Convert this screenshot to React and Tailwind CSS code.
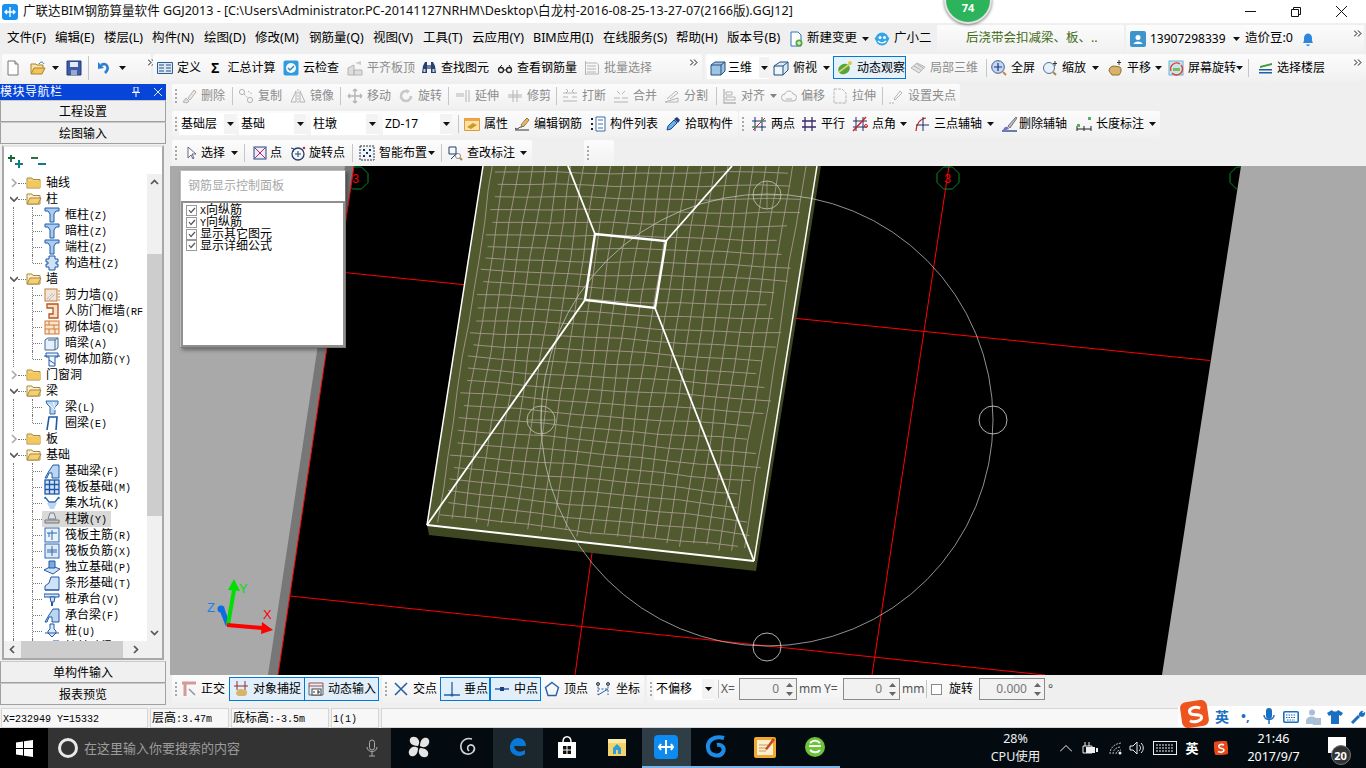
import React from "react";

const S = ({ children, w = 16, h = 16, vb = "0 0 16 16" }) => (
  <svg width={w} height={h} viewBox={vb} className="shrink-0" fill="none">{children}</svg>
);
const g = "#b4b4b4";
const I = {
  new: <><path d="M3 1h7l3 3v11H3z" fill="#fff" stroke="#777" /><path d="M10 1v3h3" fill="#ddd" stroke="#777" /></>,
  open: <><path d="M1 13V4h5l1 1h6v3" fill="#f8e2a6" stroke="#a8842c" /><path d="M1 14l3-6h11l-3 6z" fill="#f3c35a" stroke="#a8842c" /><path d="M9 4c2-3 4-2 5 0" stroke="#3a6ea8" /></>,
  save: <><path d="M1 1h14v14H1z" fill="#3c5ca8" stroke="#23397a" /><path d="M4 2h8v5H4z" fill="#e4ebf5" /><path d="M5 10h6v5H5z" fill="#9aa8c4" /></>,
  undo: <><path d="M5 5c6-3 9 3 4 8" stroke="#2a7fd0" strokeWidth="2.6" /><path d="M2 2v7l6-1z" fill="#2a7fd0" /></>,
  def: <><path d="M.5 2.5h15v11H.5z" fill="#dbe8f6" stroke="#2d5f96" /><path d="M2 5h5M2 8h5M2 11h5M9 5h5M9 8h5M9 11h5" stroke="#2d4f7a" /></>,
  cloud: <><rect x=".5" y=".5" width="15" height="15" rx="2" fill="#2f9be0" /><circle cx="8" cy="8" r="5" fill="#f4fbff" /><path d="M5 8l2 2 4-4" stroke="#2f80c0" strokeWidth="1.4" /></>,
  flat: <><path d="M1 15V8l6-3v10zM7 10h8v5H7z" fill="#ddd" stroke={g} /><path d="M8 3l6-2v4z" fill="#ccc" /></>,
  find: <><path d="M2 6l2-4h2v11H1zM14 6l-2-4h-2v11h5z" fill="#26406e" /><path d="M6 5h4v4H6z" fill="#6d7ea0" /><path d="M2.5 9h2v3h-2zM11.5 9h2v3h-2z" fill="#c6d4ea" /></>,
  glass: <><circle cx="4" cy="10" r="2.5" stroke="#222" strokeWidth="1.3" /><circle cx="12" cy="10" r="2.5" stroke="#222" strokeWidth="1.3" /><path d="M6.5 10h3M2 8l3-3M14 8l-2-3" stroke="#222" /></>,
  batch: <><path d="M1.5 1v14M1.5 3h11l2 2v9h-13" stroke={g} /><path d="M3 6h9M3 9h9M3 12h9" stroke={g} /></>,
  cube: <><path d="M1 5l4-3h10v9l-4 4H1z" fill="#9cc4e4" stroke="#26517e" /><path d="M1 5h10v10M11 5l4-3" stroke="#26517e" /></>,
  cubeT: <><path d="M1 6l6-4h8v8l-5 5H1z" fill="#d9e9f6" stroke="#26517e" /><path d="M1 6h9v9M10 6l5-4" stroke="#26517e" /><path d="M2 7h7v7H2z" fill="#eef6fb" /></>,
  orbit: <><ellipse cx="7" cy="9" rx="6" ry="5" fill="#5aa33c" transform="rotate(-30 7 9)" /><path d="M2 12l12-9" stroke="#c8d860" strokeWidth="1.6" /><circle cx="13" cy="3" r="2" fill="#e6c94a" /></>,
  local: <><path d="M1 8l6-5 8 4-6 6z" fill="#e2e2e2" stroke={g} /><path d="M4 6l7 4M7 4l6 4" stroke={g} /></>,
  full: <><circle cx="7" cy="7" r="6.3" fill="#c3d6f2" stroke="#3d5c92" /><path d="M7 3v8M3 7h8" stroke="#1b3a78" strokeWidth="1.2" /><path d="M12 12l3 3" stroke="#c88a2a" strokeWidth="2" /></>,
  zoom: <><circle cx="7" cy="8" r="5.5" fill="#e5f0fb" stroke="#55708f" /><path d="M11 12l3 3" stroke="#a98b4a" strokeWidth="2" /><path d="M13 1v5M11 3.5h4" stroke="#333" /></>,
  pan: <><path d="M2 11c0-3 2-5 5-5l6 1c2 2 1 6-1 8H5z" fill="#d8b468" stroke="#8d6f2e" /><path d="M12 0v5M10 2.5h4" stroke="#333" /></>,
  rot: <><rect x="1" y="1" width="14" height="14" fill="#c9e4ee" stroke="#6fb4d4" /><path d="M3 11a6 6 0 0 1 9-7M13 5a6 6 0 0 1-9 8" stroke="#e04030" strokeWidth="1.4" /><path d="M5 8h7v3H5z" fill="#7dbb55" /></>,
  floor: <><path d="M2 6l12-3v2L2 8z" fill="#3f9a46" /><path d="M1 9h13v1.6H1zM1 12h13v1.6H1z" fill="#1d5fa0" /></>,
  del: <><path d="M2 14l3-4 3 3-2 2z" fill="#ddd" stroke={g} /><path d="M7 10l6-8 2 2-6 8z" fill="#e8e8e8" stroke={g} /></>,
  copy: <><circle cx="4" cy="4" r="2.6" stroke={g} /><circle cx="12" cy="12" r="2.6" stroke={g} /><path d="M6 6l4 4M10 3l4 3" stroke={g} strokeDasharray="2 1" /></>,
  mirror: <><path d="M1 14L6 3v11zM15 14L10 3v11z" stroke={g} /><path d="M8 1v14" stroke={g} strokeDasharray="2 1" /></>,
  move: <><path d="M8 1v14M1 8h14M8 1L6 3M8 1l2 2M8 15l-2-2M8 15l2-2M1 8l2-2M1 8l2 2M15 8l-2-2M15 8l-2 2" stroke={g} strokeWidth="1.4" /></>,
  rotate: <><path d="M13 8a5 5 0 1 1-3-4.6" stroke="#c8c8c8" strokeWidth="2.6" /><path d="M8 1l4 2-3 3z" fill="#c8c8c8" /></>,
  extend: <><path d="M1 8h8M1 6h8" stroke={g} /><path d="M11 2v12M14 2v12" stroke={g} /></>,
  trim: <><path d="M1 7h14M1 9h14M6 2v12M10 2v12" stroke={g} /></>,
  brk: <><path d="M1 5h14M1 13h14" stroke={g} /><path d="M1 9h5M10 9h5M4 1l2 2-2 2M12 1l-2 2 2 2" stroke={g} /></>,
  merge: <><path d="M1 10h6M9 10h6M1 14h14M4 3l3 3M12 3L9 6" stroke={g} /></>,
  split: <><path d="M1 14l13-4v4zM3 11l9-8 2 2-8 6" stroke={g} /></>,
  align: <><path d="M2 1v14h12" stroke={g} strokeWidth="1.3" /><path d="M4 4h6v3H4zM4 9h9v3H4z" stroke={g} /></>,
  offset: <><path d="M4 13a3.5 3.5 0 0 1 0-7c1-4 7-4 8 0a3.5 3.5 0 0 1 0 7z" stroke={g} /><path d="M5 11h6" stroke={g} /></>,
  stretch: <><path d="M2 1h8l4 4v10H2z" stroke={g} strokeDasharray="3 1" /></>,
  grip: <><path d="M1 15h5" stroke={g} strokeDasharray="2 1" /><path d="M6 11l6-8 2 2-7 7z" stroke={g} /></>,
  prop: <><path d="M.5 2.5h15v12H.5z" fill="#ffe1a8" stroke="#e09a3a" /><path d="M1 2.5h14v2.5H1z" fill="#f0a548" /><path d="M3 11l6-4 4 2-6 4z" fill="#c89a28" /></>,
  edit: <><path d="M1 12c3 3 4-2 7-1M7 9l6-7 2 2-6 7z" stroke="#333" /><path d="M7 9l6-7 2 2-6 7z" fill="#e6b65a" /><path d="M1 14h14" stroke="#333" /></>,
  list: <><path d="M6 1h9v14H6z" fill="#fff" stroke="#3b6ea0" /><path d="M8 4h5M8 8h5M8 12h5" stroke="#3b6ea0" /><path d="M1 3h3M1 8h3M1 13h3" stroke="#222" strokeWidth="2" strokeDasharray="2 1" /></>,
  pick: <><path d="M2 14l1-4 6-6 3 3-6 6z" fill="#6ab0e8" stroke="#1d4a8a" /><path d="M9 3l3-2 3 3-2 3z" fill="#1d3f80" /></>,
  two: <><path d="M4 1v14M11 1v14M1 5h14M1 11h14" stroke="#1d2a6a" /><path d="M2 14L14 2" stroke="#d02020" /><circle cx="4" cy="11" r="1.3" fill="#3a9a3a" /><circle cx="11" cy="5" r="1.3" fill="#3a9a3a" /></>,
  par: <><path d="M4 1v14M11 1v14M1 5h14M1 11h14" stroke="#3b2a6a" strokeWidth="1.3" /></>,
  ang: <><path d="M4 1v14M11 1v14M1 5h14M1 11h14" stroke="#1d2a6a" /><path d="M1 15L14 1" stroke="#d02020" strokeWidth="1.4" /><circle cx="14" cy="10" r="1.5" stroke="#d02020" /></>,
  three: <><path d="M2 15C2 8 6 3 12 2" stroke="#d02020" strokeWidth="1.2" /><path d="M9 1v14M2 9h13" stroke="#1d2a6a" /></>,
  delaux: <><path d="M1 15h15" stroke="#274f8a" strokeWidth="1.4" /><path d="M2 14c1-3 3-4 5-3l1 2-5 1.6z" fill="#7a6fc0" /><path d="M7 10l8-9 1 1-7 10z" fill="#b9b9d0" stroke="#777" /></>,
  dim: <><path d="M1 10v5M8 10v5M15 10v5M1 13h14" stroke="#222" /><rect x="1" y="8" width="3" height="3" fill="#58b058" /><rect x="12" y="1" width="3" height="3" fill="#58b058" /></>,
  sel: <><path d="M4 2v11l3-3 2 4 1-1-2-4h4z" fill="#fff" stroke="#668" /></>,
  pt: <><rect x="2" y="2" width="12" height="12" fill="#e6eefa" stroke="#27457e" /><path d="M3 3l10 10M13 3L3 13" stroke="#d02050" /></>,
  rotpt: <><circle cx="8" cy="9" r="6" stroke="#24406e" strokeWidth="1.3" /><path d="M8 6v6M5 9h6" stroke="#24406e" /><path d="M1 3l3 1-1 3" stroke="#24406e" /><circle cx="14" cy="3" r="1.3" fill="#c03030" /></>,
  smart: <><rect x="1" y="1" width="14" height="14" stroke="#333" strokeDasharray="2 1" fill="#eef4fb" /><path d="M4 4h2v2H4zM10 4h2v2h-2zM7 7h2v2H7zM4 10h2v2H4zM10 10h2v2h-2z" fill="#234" /></>,
  check: <><path d="M2 2v7h7V2zM4 14l6-6" stroke="#23406e" /><circle cx="11" cy="11" r="2.5" fill="#fff" stroke="#888" /><path d="M13 13l2 2" stroke="#b88a2a" strokeWidth="2" /></>,
  ortho: <><path d="M1 2h14M4 2v13" stroke="#d59a9a" strokeWidth="3" /><path d="M8 8l4 4 2 2" stroke="#889" strokeWidth="1.3" /></>,
  snap: <><path d="M4 0v9M12 0v9M1 5h14" stroke="#8a3030" /><path d="M3 13c0-3 2-5 5-5l5 1c2 2 1 5-1 6H5z" fill="#d8b468" /></>,
  dyn: <><path d="M1 2h14v3H1z" stroke="#a05050" /><path d="M1 5v9h14V5" stroke="#666" /><rect x="4" y="8" width="9" height="6" fill="#fff" stroke="#444" /><path d="M6 10v2M9 10h2v2H9" stroke="#222" /></>,
  cross: <><path d="M2 2l12 12M14 2L2 14" stroke="#2860a8" strokeWidth="1.6" /></>,
  perp: <><path d="M8 1v13M0 14h16" stroke="#2860a8" strokeWidth="1.3" /><circle cx="8" cy="14" r="1.6" fill="#2860a8" /></>,
  mid: <><path d="M1 8h14" stroke="#2860a8" strokeWidth="1.5" /><rect x="6" y="6" width="4" height="4" fill="#1d3f80" /></>,
  vert: <><path d="M8 1.5l6.5 5-2.500 8h-8l-2.500-8z" stroke="#2860a8" strokeWidth="1.4" /></>,
  coord: <><path d="M3 2v12M13 2v12M3 8h10" stroke="#2860a8" strokeDasharray="2 1.500" /><path d="M3 14l10-6" stroke="#2860a8" /><circle cx="3" cy="3" r="1.500" stroke="#333" /><circle cx="13" cy="3" r="1.500" stroke="#333" /></>,
  change: <><path d="M3 1h7l3 3v11H3z" fill="#fff" stroke="#2e72b8" /><circle cx="11" cy="12" r="3.500" fill="#55a83a" /><path d="M11 10v4M9 12h4" stroke="#fff" /></>,
  qq: <><circle cx="8" cy="8" r="6.500" fill="#33a6ea" /><circle cx="6" cy="6.500" r="1.500" fill="#fff" /><circle cx="10.500" cy="6.500" r="1.500" fill="#fff" /><path d="M4 10c2 2.500 6 2.500 8 0" stroke="#fff" strokeWidth="1.300" /><path d="M1 8l2-1M15 8l-2-1" stroke="#33a6ea" strokeWidth="2" /></>,
  user: <><rect width="16" height="16" rx="2" fill="#3c95cc" /><circle cx="8" cy="6.500" r="2.500" fill="#fff" /><path d="M3.500 13c.5-3.500 8.500-3.500 9 0z" fill="#fff" /></>,
  bell: <><path d="M3 12c1-1 1-3 1-5 0-6 8-6 8 0 0 2 0 4 1 5z" fill="#2e86de" /><path d="M6 13.500c1 2 3 2 4 0z" fill="#2e86de" /></>,
};
const Ic = ({ n }) => <S>{I[n]}</S>;
const Caret = ({ c = "" }) => <svg width="7" height="4" viewBox="0 0 7 4" className={"shrink-0 " + c}><path d="M0 0h7L3.500 4z" fill="#111" /></svg>;
const More = ({ c = "" }) => <svg width="8" height="7" viewBox="0 0 8 7" className={"shrink-0 " + c} fill="none"><path d="M0 .5l3 3-3 3M4 .5l3 3-3 3" stroke="#111" /></svg>;
const Sep = ({ c = "" }) => <div className={"w-px h-[18px] bg-[#c6c6c6] shrink-0 " + c} />;
const Grip = ({ c = "" }) => <div className={"w-[3px] h-[14px] shrink-0 border-l-2 border-dotted border-[#a8a8a8] " + c} />;
const T = ({ i, t, c = "", d, gap = "gap-[4px]" }) => (
  <div className={"flex items-center shrink-0 " + gap + " " + c + (d ? " text-[#8c8c8c]" : " text-black")}>
    {i && <Ic n={i} />}
    <span className="whitespace-nowrap">{t}</span>
  </div>
);
const Seg = ({ c = "", children }) => (
  <div className={"flex items-center shrink-0 bg-linear-to-b from-[#fcfcfc] to-[#f1f1f1] rounded-[2px] " + c}>{children}</div>
);
const Sel = ({ t, c, text = "" }) => (
  <div className={"h-[22px] bg-white flex items-center shrink-0 " + c}>
    <span className={"flex-1 pl-[2px] " + text}>{t}</span>
    <div className="w-[12px] h-[20px] bg-[#f3f3f3] flex items-center justify-center"><Caret /></div>
  </div>
);
const Mono = ({ t }) => (
  <span className="whitespace-nowrap">
    {t.split(/([\x00-\x7f]+)/).map((p, k) =>
      /[\x00-\x7f]/.test(p)
        ? <span key={k} className="text-[10px] font-[family-name:'Liberation_Mono',monospace]">{p}</span>
        : <span key={k} className="text-[12px]">{p}</span>
    )}
  </span>
);

/* tree */
const col = <><path d="M1 1h14v3h-3L10 7v8H6V7L4 4H1z" fill="#a9cdf0" stroke="#1f58a8" /></>;
const TI = {
  col,
  zao: <><path d="M5 1h6v3h3v3h-2v2h2v3h-3v3H5v-3H2V9h2V7H2V4h3z" fill="#cfe2f6" stroke="#1f58a8" /></>,
  shear: <><rect x="1" y="2" width="12" height="12" fill="#eee6dc" stroke="#c87a35" /><path d="M3 12l6-6M5 13l6-6" stroke="#999" strokeDasharray="1 1" /><path d="M15 3v11" stroke="#c87a35" strokeDasharray="2 1" /></>,
  door: <><path d="M3 1h11v14H5v-4h4V5H3z" fill="#f6dec8" stroke="#b8541e" strokeWidth="1.300" /></>,
  brick: <><rect x="1" y="2" width="14" height="13" fill="#fbe5cf" stroke="#d07a3a" /><path d="M1 6h14M1 10h14M5 2v4M10 6v4M5 10v5M11 10v5" stroke="#d07a3a" /></>,
  dark: <><path d="M1 5l3-2h10v10l-3 2H1z" fill="#e6f0fa" stroke="#47698e" /><path d="M4 5h7v10M11 5l3-2" stroke="#47698e" /></>,
  rein: <><path d="M2 2h12v4h-3v9H5V6H2z" stroke="#1f58a8" fill="#f2f7fc" /><path d="M0 5h16M5 9l6 4" stroke="#1f58a8" /></>,
  beam: <><path d="M2 2h12v3l-3 3v7H6V8L3 5z" fill="#b8d8f2" stroke="#2f6ab0" /><path d="M5 5l6 6M9 3l3 8" stroke="#fff" /></>,
  ring: <><path d="M3 15L5 2h8l-1 13" stroke="#1f58a8" strokeWidth="1.600" /></>,
  fbeam: <><path d="M1 15l4-7 4-6h6v13H8V10H5l-2 5z" fill="#bcd6f2" stroke="#1f58a8" /></>,
  raft: <><rect x="1" y="1" width="14" height="14" fill="#d2e3f6" stroke="#1f58a8" strokeWidth="1.300" /><path d="M1 5.500h14M1 10.500h14M5.500 1v14M10.500 1v14" stroke="#1f58a8" strokeWidth="1.300" /></>,
  pit: <><path d="M1 2l4 5h6l4-5M1 2v2M15 2v2" stroke="#2f6ab0" strokeWidth="1.300" /><path d="M3 8h10l-3 6H6z" fill="#bcd6f2" /></>,
  pier: <><path d="M6 2h4l2 6H4z" stroke="#7a7f88" fill="#dde3ea" /><path d="M1 9h14v3H1z" fill="#c5c5c5" stroke="#777" /></>,
  bar1: <><rect x="1" y="1" width="14" height="14" fill="#eaf2fb" stroke="#2f6ab0" /><path d="M8 3v10M3 6h10M5 6v4" stroke="#2f6ab0" /></>,
  bar2: <><rect x="1" y="1" width="14" height="14" fill="#dfeaf7" stroke="#2f6ab0" /><path d="M8 3v10M3 7h10M3 9h10" stroke="#2f6ab0" /></>,
  ind: <><path d="M0 11l8-4 8 3-7 5z" fill="#cfe2f6" stroke="#1f58a8" /><path d="M5 2h6v7H5z" fill="#7fa9d8" stroke="#1f58a8" /></>,
  strip: <><path d="M1 15V11l4-3 2-6h8v13z" fill="#cfe2f6" stroke="#1f58a8" /><path d="M1 15h14" stroke="#1f58a8" /></>,
  cap: <><path d="M0 3h15v3H0z" fill="#cfe2f6" stroke="#1f58a8" /><path d="M6 6h5l-1 5H7z" fill="#cfe2f6" stroke="#1f58a8" /><path d="M8 11v4" stroke="#1f58a8" strokeWidth="2" /></>,
  pile: <><path d="M6 1h4v5l2 2v2l-4 4-4-4V8l2-2z" fill="#dce9f6" stroke="#1f58a8" /><path d="M1 10h14" stroke="#1f58a8" /></>,
};
const tree = [
  ["f", "轴线", 0], ["f", "柱", 1],
  ["c", "框柱(Z)", "col"], ["c", "暗柱(Z)", "col"], ["c", "端柱(Z)", "col"], ["l", "构造柱(Z)", "zao"],
  ["f", "墙", 1],
  ["c", "剪力墙(Q)", "shear"], ["c", "人防门框墙(RF", "door"], ["c", "砌体墙(Q)", "brick"], ["c", "暗梁(A)", "dark"], ["l", "砌体加筋(Y)", "rein"],
  ["f", "门窗洞", 0], ["f", "梁", 1],
  ["c", "梁(L)", "beam"], ["l", "圈梁(E)", "ring"],
  ["f", "板", 0], ["f", "基础", 1],
  ["c", "基础梁(F)", "fbeam"], ["c", "筏板基础(M)", "raft"], ["c", "集水坑(K)", "pit"], ["c", "柱墩(Y)", "pier", 1], ["c", "筏板主筋(R)", "bar1"], ["c", "筏板负筋(X)", "bar2"], ["c", "独立基础(P)", "ind"], ["c", "条形基础(T)", "strip"], ["c", "桩承台(V)", "cap"], ["c", "承台梁(F)", "fbeam"], ["c", "桩(U)", "pile"], ["c", "桩基础梁(T)", "fbeam"],
];
const Folder = ({ open }) => (
  <S vb="0 0 16 16">
    <path d="M1 13V3h5l1 1.500h7V13z" fill={open ? "#fbeec8" : "#f6d27a"} stroke="#a98a3e" />
    {open ? <path d="M1 13l3-6h11l-3 6z" fill="#f6cf74" stroke="#a98a3e" /> : <path d="M1.500 6h13v6.500h-13z" fill="#f2c85e" />}
  </S>
);
const TreeRow = ({ r }) => {
  if (r[0] === "f") return (
    <div className="h-4 flex items-center">
      <div className="w-[6px] shrink-0" />
      <svg width="8" height="10" viewBox="0 0 8 10" className="shrink-0" fill="none">
        {r[2] ? <path d="M0 3l4 4 4-4" stroke="#555" strokeWidth="1.600" /> : <path d="M2 1l4 4-4 4" stroke="#aaa" strokeWidth="1.600" />}
      </svg>
      <div className="w-[8px] shrink-0 border-t border-dotted border-[#777]" />
      <Folder open={r[2]} />
      <span className="ml-[4px] text-[12px]">{r[1]}</span>
    </div>
  );
  return (
    <div className="h-4 flex items-center">
      <div className="w-[9px] shrink-0" />
      <div className="w-px h-4 shrink-0 border-l border-dotted border-[#777]" />
      <div className="w-[18px] shrink-0" />
      <div className={"w-px shrink-0 border-l border-dotted border-[#777] " + (r[0] === "l" ? "h-2 self-start" : "h-4")} />
      <div className="w-[9px] shrink-0 border-t border-dotted border-[#777]" />
      <div className={"h-4 flex items-center gap-[5px] pl-[2px] pr-[4px] " + (r[3] ? "bg-[#d9d9d9]" : "")}>
        <S>{TI[r[2]]}</S>
        <Mono t={r[1]} />
      </div>
    </div>
  );
};
const ChevS = ({ d }) => (
  <svg width="9" height="9" viewBox="0 0 9 9" fill="none"><path d={d} stroke="#555" strokeWidth="1.700" /></svg>
);
const Btn = ({ t }) => (
  <div className="h-[22px] pt-[2px] bg-[#f0f0f0] border border-[#a0a0a0] border-t-[#c9c9c9] flex items-center justify-center text-[12px] text-black">{t}</div>
);

function Sidebar() {
  return (
    <div className="w-[166px] shrink-0 flex flex-col">
      <div className="h-[16px] bg-[#0645d8] flex items-center text-white text-[12px] tracking-[0.5px] pl-0">
        <span className="flex-1">模块导航栏</span>
        <svg width="8" height="10" viewBox="0 0 8 10" fill="none" className="mr-[14px]"><path d="M2 0h4v5H2zM0 5.500h8M4 6v4" stroke="#fff" /></svg>
        <svg width="8" height="8" viewBox="0 0 8 8" fill="none" className="mr-[4px]"><path d="M0 0l8 8M8 0L0 8" stroke="#dfe8ff" /></svg>
      </div>
      <Btn t="工程设置" />
      <Btn t="绘图输入" />
      <div className="h-[515px] mx-[2px] mt-px border-2 border-[#a8a8a8] border-t-[#e4e4e4] bg-white flex flex-col">
        <div className="h-[27px] shrink-0 flex items-center gap-[6px] pl-[3px]">
          <svg width="17" height="14" viewBox="0 0 17 14" fill="none"><path d="M4 1v7M1 4h7" stroke="#163" strokeWidth="1.800" /><path d="M12 6v8M8 10h8" stroke="#0b7f86" strokeWidth="2" /></svg>
          <svg width="17" height="14" viewBox="0 0 17 14" fill="none"><path d="M1 4h7" stroke="#163" strokeWidth="1.800" /><path d="M8 10h8" stroke="#0b7f86" strokeWidth="2" /></svg>
        </div>
        <div className="flex flex-1 min-h-0">
          <div className="flex-1 overflow-hidden min-w-0 pt-px"><div>{tree.map((r, i) => <TreeRow key={i} r={r} />)}</div></div>
          <div className="w-[15px] shrink-0 bg-[#f0f0f0] flex flex-col items-center">
            <div className="h-[17px] flex items-center"><ChevS d="M1 6l3.500-3.500L8 6" /></div>
            <div className="h-[63px]" />
            <div className="w-full h-[262px] bg-[#cdcdcd]" />
            <div className="flex-1" />
            <div className="h-[17px] flex items-center"><ChevS d="M1 3l3.500 3.500L8 3" /></div>
          </div>
        </div>
        <div className="h-[17px] shrink-0 bg-[#f0f0f0] flex items-center">
          <div className="w-[17px] flex justify-center"><ChevS d="M6 1L2.500 4.500 6 8" /></div>
          <div className="w-[102px] h-full bg-[#cdcdcd]" />
          <div className="flex-1 flex justify-center"><ChevS d="M3 1l3.500 3.500L3 8" /></div>
          <div className="w-[15px]" />
        </div>
      </div>
      <div className="mt-px"><Btn t="单构件输入" /></div>
      <Btn t="报表预览" />
    </div>
  );
}

/* canvas drawing */
const P = (u, v) => [427 + 327 * u + 56 * v + 7 * u * v, 525 + 36 * u - 359 * v - 36 * u * v];
const pts = (a) => a.map((p) => p[0].toFixed(1) + "," + p[1].toFixed(1)).join(" ");
const rows = [];
for (let i = 0; i < 34; i++) {
  const v = 0.03 + i * 0.034;
  const a = 0.035 + 0.02 * Math.abs(Math.sin(i * 1.9));
  const b = 0.945 + 0.03 * Math.sin(i * 1.3);
  const line = [];
  for (let k = 0; k <= 10; k++) {
    const u = a + ((b - a) * k) / 10;
    const wob = 0.0025 * Math.sin(u * 9 + i * 0.7) + 0.0015 * Math.sin(u * 23 + i);
    line.push(P(u, v + wob));
  }
  rows.push(line);
}
const cols = [];
for (let j = 0; j < 25; j++) {
  const u = 0.03 + j * 0.039;
  const s = 0.01 + 0.02 * Math.abs(Math.sin(j * 2.3));
  const line = [];
  for (let k = 0; k <= 12; k++) {
    const v = s + ((1.12 - s) * k) / 12;
    const wob = 0.0025 * Math.sin(v * 11 + j * 0.9) + 0.0015 * Math.sin(v * 25 + j);
    line.push(P(u + wob, v));
  }
  cols.push(line);
}
const Axis = ({ x, y }) => (
  <path d={`M${x - 4.500} ${y - 11}h9l6.500 6.500v9l-6.500 6.500h-9l-6.500-6.500v-9z`} stroke="#0a8a2a" />
);
function Drawing() {
  return (
    <svg viewBox="170 166 1196 509" width="1196" height="509" className="block" fill="none">
      <rect x="170" y="166" width="1196" height="509" fill="#a9a9a9" />
      <polygon points="345,166 354,166 278,675 268,675" fill="#777777" />
      <polygon points="354,166 1241,166 1162,675 278,675" fill="#000" />
      <clipPath id="blk"><polygon points="354,166 1241,166 1162,675 278,675" /></clipPath>
      <path d="M354 166L278 675M300 268L1210 360.500M290 596L1045 675M949 166L872 675M592 553L575 675" stroke="#f00" />
      <g clipPath="url(#blk)"><Axis x={357} y={178} /><Axis x={948} y={178} /><Axis x={1241} y={178} /></g>
      <text x="944" y="183" fill="#f00" fontSize="12" fontFamily="Liberation Mono">3</text>
      <text x="352" y="183" fill="#f00" fontSize="12" fontFamily="Liberation Mono">3</text>
      <polygon points="427,525 754,561 817,166 821,166 756,571 429,535" fill="#3f4722" />
      <polygon points="427,525 754,561 817,166 483,166" fill="#515a2e" />
      <clipPath id="plate"><polygon points="427,525 754,561 817,166 483,166" /></clipPath>
      <g clipPath="url(#plate)" stroke="#a5978e" strokeWidth="0.9">
        {rows.map((l, i) => <polyline key={i} points={pts(l)} />)}
        {cols.map((l, i) => <polyline key={i} points={pts(l)} />)}
      </g>
      <circle cx="767" cy="420" r="226" stroke="#cfcfcf" strokeWidth="0.7" />
      <g stroke="#c9c9b8" strokeWidth="0.8">
        <circle cx="541" cy="420" r="14" /><circle cx="993" cy="420" r="14" stroke="#ddd" /><circle cx="767" cy="647" r="14" stroke="#ddd" /><circle cx="767" cy="195" r="14" />
        <path d="M527 420h28M541 406v28M753 195h28M767 181v28" strokeWidth="0.5" />
      </g>
      <g stroke="#fff" strokeWidth="2.400">
        <path d="M595 234L666 241L655 308L585 300Z" strokeLinejoin="miter" />
        <path d="M595 234L568 166M666 241L732 166M585 300L427 525M655 308L754 561" strokeWidth="1.800" />
        <path d="M427 525L754 561" strokeWidth="2" />
        <path d="M427 525L483 166M754 561L817 166" strokeWidth="1.500" />
      </g>
      {/* gizmo */}
      <path d="M228 625L221 607" stroke="#0a6ee0" strokeWidth="5" />
      <circle cx="221" cy="609" r="3.500" fill="#0a6ee0" />
      <path d="M228 625L234 590" stroke="#00e000" strokeWidth="4" />
      <polygon points="234,579 228,590 240,591" fill="#00e000" />
      <path d="M227 625L262 628" stroke="#f00" strokeWidth="4" />
      <polygon points="273,630 262,622 261,634" fill="#f00" />
      <text x="239" y="593" fill="#00e000" fontSize="13" fontFamily="Liberation Sans">Y</text>
      <text x="263" y="619" fill="#f00" fontSize="13" fontFamily="Liberation Sans">X</text>
      <text x="207" y="612" fill="#1a80f0" fontSize="13" fontFamily="Liberation Sans">Z</text>
    </svg>
  );
}
const Spin = ({ t, c }) => (
  <div className={"h-[22px] bg-[#f2f2f2] border border-[#8a8a8a] flex items-center shrink-0 " + c}>
    <span className="flex-1 text-right pr-[4px] text-[#777]">{t}</span>
    <div className="w-[13px] h-full flex flex-col items-center justify-center gap-[5px]">
      <svg width="7" height="4" viewBox="0 0 7 4"><path d="M3.500 0L7 4H0z" fill="#666" /></svg>
      <svg width="7" height="4" viewBox="0 0 7 4"><path d="M0 0h7L3.500 4z" fill="#666" /></svg>
    </div>
  </div>
);
const On = ({ c = "", children }) => <div className={"h-[24px] flex items-center gap-[4px] pl-[3px] border border-[#0078d7] bg-[#e1effa] shrink-0 whitespace-nowrap " + c}>{children}</div>;
const Check = ({ t }) => (
  <div className="h-[11.700px] flex items-center gap-[3px]">
    <div className="w-[11px] h-[11px] border border-[#9a9a9a] bg-white flex items-center justify-center shrink-0">
      <svg width="8" height="7" viewBox="0 0 8 7" fill="none"><path d="M1 3l2 2.500L7 1" stroke="#555" strokeWidth="1.200" /></svg>
    </div>
    <Mono t={t} />
  </div>
);
const Cell = ({ c, children }) => <div className={"h-full bg-[#f7f7f7] border border-[#d6d6d6] flex items-center pl-px shrink-0 " + c}>{children}</div>;
const TB = ({ under, children, c = "" }) => (
  <div className={"w-[49.500px] h-full flex items-center justify-center shrink-0 border-b-2 " + c + (under ? " border-[#7cb4e8]" : " border-transparent")}>{children}</div>
);

export default function App() {
  return (
    <div className="relative w-[1366px] h-[768px] overflow-hidden flex flex-col bg-[#efefef] text-[12px] text-black leading-none font-[family-name:'Noto_Sans','Noto_Sans_CJK_SC',sans-serif]">
      {/* title */}
      <div className="h-[23px] shrink-0 bg-white flex items-center">
        <div className="ml-[2px] w-[16px] h-[16px] rounded-[3px] bg-[#1891f0] flex items-center justify-center">
          <svg width="12" height="12" viewBox="0 0 12 12" fill="none"><path d="M6 1v10M1 6h10M3 4L1 6l2 2M9 4l2 2-2 2" stroke="#fff" strokeWidth="1.400" /></svg>
        </div>
        <span className="ml-[5px] text-[12.560px] text-[#111] whitespace-nowrap">广联达BIM钢筋算量软件 GGJ2013 - [C:\Users\Administrator.PC-20141127NRHM\Desktop\白龙村-2016-08-25-13-27-07(2166版).GGJ12]</span>
        <div className="flex-1" />
        <svg width="11" height="1" viewBox="0 0 11 1" className="mr-[35px]"><path d="M0 .5h11" stroke="#111" /></svg>
        <svg width="10" height="10" viewBox="0 0 10 10" fill="none" className="mr-[35px]"><path d="M.5 2.500h7v7h-7zM2.500 2.500v-2h7v7h-2" stroke="#111" /></svg>
        <svg width="11" height="11" viewBox="0 0 11 11" fill="none" className="mr-[19px]"><path d="M0 0l11 11M11 0L0 11" stroke="#111" /></svg>
      </div>
      {/* menu */}
      <div className="h-[31px] shrink-0 flex items-center pl-[7px] text-[12.500px]">
        <T t="文件(F)" c="w-[48px]" /><T t="编辑(E)" c="w-[49px]" /><T t="楼层(L)" c="w-[48px]" /><T t="构件(N)" c="w-[52px]" /><T t="绘图(D)" c="w-[51px]" /><T t="修改(M)" c="w-[54px]" /><T t="钢筋量(Q)" c="w-[64px]" /><T t="视图(V)" c="w-[50px]" /><T t="工具(T)" c="w-[49px]" /><T t="云应用(Y)" c="w-[61px]" /><T t="BIM应用(I)" c="w-[70px]" /><T t="在线服务(S)" c="w-[73px]" /><T t="帮助(H)" c="w-[51px]" /><T t="版本号(B)" c="w-[61px]" />
        <T i="change" t="新建变更" c="w-[74px]" gap="gap-[3px]" /><Caret c="mr-[5px]" />
        <T i="qq" t="广小二" c="w-[63px]" />
        <Seg c="w-[187px] h-[27px] pl-[29px] text-[#3f6a12]"><span className="whitespace-nowrap">后浇带会扣减梁、板、..</span></Seg>
        <Seg c="w-[238px] h-[27px] ml-[2px] pl-[4px]">
          <T i="user" t="13907298339" c="w-[103px] text-[12px]" /><Caret c="mr-[5px]" />
          <span className="whitespace-nowrap">造价豆:0</span>
          <div className="ml-[7px]"><Ic n="bell" /></div>
          <More c="ml-[38px] -mt-[10px]" />
        </Seg>
      </div>
      {/* toolbar 1 */}
      <div className="h-[27px] shrink-0 flex items-center pl-[2px]">
        <Seg c="w-[149px] h-[27px] pl-[3px]">
          <Ic n="new" /><div className="ml-[9px]"><Ic n="open" /></div><Caret c="ml-[6px]" />
          <div className="ml-[7px]"><Ic n="save" /></div><Sep c="ml-[6px] h-[24px]" />
          <div className="ml-[7px]"><Ic n="undo" /></div><Caret c="ml-[7px]" /><More c="ml-[22px] -mt-[10px]" />
        </Seg>
        <Seg c="w-[549px] h-[27px] ml-[2px] pl-[4px]">
          <T i="def" t="定义" c="w-[54px]" />
          <div className="w-[72px] flex items-center gap-[8px] shrink-0"><span className="text-[14px] font-bold font-[family-name:'Liberation_Sans',sans-serif]">Σ</span><span className="whitespace-nowrap">汇总计算</span></div>
          <T i="cloud" t="云检查" c="w-[64px]" /><T i="flat" t="平齐板顶" d c="w-[74px]" /><T i="find" t="查找图元" c="w-[76px]" /><T i="glass" t="查看钢筋量" c="w-[87px]" /><T i="batch" t="批量选择" d c="w-[106px]" /><More c="-mt-[10px]" />
        </Seg>
        <Seg c="flex-1 h-[27px] ml-[3px]">
          <div className="ml-[2px] w-[62px] h-[23px] bg-white flex items-center pl-[3px] gap-[2px] shrink-0"><Ic n="cube" /><span className="whitespace-nowrap">三维</span><div className="ml-[5px] w-[10px] h-[21px] bg-[#f2f2f2] flex items-center justify-center"><Caret /></div></div>
          <div className="ml-[4px]"><T i="cubeT" t="俯视" c="w-[50px]" /></div><Caret c="mr-[3px]" />
          <div className="w-[73px] h-[23px] border border-[#0078d7] bg-[#e5f1fb] flex items-center gap-[4px] pl-[3px] shrink-0"><Ic n="orbit" /><span className="whitespace-nowrap">动态观察</span></div>
          <div className="ml-[4px]"><T i="local" t="局部三维" d c="w-[76px]" /></div>
          <Sep c="mr-[4px]" />
          <T i="full" t="全屏" c="w-[51px]" /><T i="zoom" t="缩放" c="w-[50px]" /><Caret c="mr-[8px]" />
          <T i="pan" t="平移" c="w-[48px]" /><Caret c="mr-[6px]" /><T i="rot" t="屏幕旋转" c="w-[70px]" /><Caret c="-ml-[2px]" /><Sep c="ml-[5px] mr-[9px]" />
          <T i="floor" t="选择楼层" c="w-[81px]" gap="gap-[3px]" /><More c="ml-[15px] -mt-[10px]" />
        </Seg>
      </div>
      <div className="h-[3px] shrink-0" />
      {/* main */}
      <div className="h-[621px] shrink-0 flex">
        <Sidebar />
        <div className="w-[4px] shrink-0" />
        <div className="flex-1 min-w-0 flex flex-col">
          {/* edit row */}
          <Seg c="h-[24px] w-[788px] ml-[2px] pl-[3px]">
            <Grip c="mr-[3px]" />
            <T i="del" t="删除" d c="w-[51px]" /><Sep c="mr-[5px]" />
            <T i="copy" t="复制" d c="w-[52px]" /><T i="mirror" t="镜像" d c="w-[50px]" /><Sep c="mr-[6px]" />
            <T i="move" t="移动" d c="w-[51px]" /><T i="rotate" t="旋转" d c="w-[50px]" /><Sep c="mr-[6px]" />
            <T i="extend" t="延伸" d c="w-[52px]" /><T i="trim" t="修剪" d c="w-[49px]" /><Sep c="mr-[5px]" />
            <T i="brk" t="打断" d c="w-[51px]" /><T i="merge" t="合并" d c="w-[51px]" /><T i="split" t="分割" d c="w-[52px]" /><Sep c="mr-[5px]" />
            <T i="align" t="对齐" d c="w-[48px]" gap="gap-[3px]" /><Caret c="mr-[4px] opacity-50" />
            <T i="offset" t="偏移" d c="w-[51px]" /><T i="stretch" t="拉伸" d c="w-[50px]" /><Sep c="mr-[5px]" />
            <T i="grip" t="设置夹点" d />
          </Seg>
          {/* layer row */}
          <div className="h-[26px] mt-[3px] flex items-center shrink-0 ml-[2px]">
            <Seg c="h-[26px] w-[566px] pl-[3px]">
              <Grip c="mr-[1px]" />
              <Sel t="基础层" c="w-[57px]" /><Sel t="基础" c="w-[67px] ml-[3px]" /><Sel t="柱墩" c="w-[67px] ml-[5px]" /><Sel t="ZD-17" c="w-[69px] ml-[5px]" />
              <Sep c="ml-[6px] mr-[5px]" />
              <T i="prop" t="属性" c="w-[50px]" /><T i="edit" t="编辑钢筋" c="w-[76px]" /><T i="list" t="构件列表" c="w-[75px]" /><T i="pick" t="拾取构件" />
            </Seg>
            <Seg c="h-[26px] w-[421px] ml-px pl-[3px]">
              <Grip c="mr-[6px]" />
              <T i="two" t="两点" c="w-[50px]" /><T i="par" t="平行" c="w-[51px]" /><T i="ang" t="点角" c="w-[48px]" /><Caret c="mr-[7px]" />
              <T i="three" t="三点辅轴" c="w-[73px]" /><Caret c="mr-[7px]" /><T i="delaux" t="删除辅轴" c="w-[75px]" gap="gap-[2px]" /><T i="dim" t="长度标注" c="w-[73px]" /><Caret />
            </Seg>
          </div>
          {/* select row */}
          <div className="h-[26px] mt-[3px] flex items-center shrink-0 ml-[2px]">
            <Seg c="h-[26px] w-[360px] pl-[3px]">
              <Grip c="mr-[6px]" />
              <T i="sel" t="选择" c="w-[47px]" gap="gap-[1px]" /><Caret c="mr-[6px]" /><Sep c="mr-[7px]" />
              <T i="pt" t="点" c="w-[38px]" gap="gap-[2px]" /><T i="rotpt" t="旋转点" c="w-[62px]" gap="gap-[3px]" /><Sep c="mr-[6px]" />
              <T i="smart" t="智能布置" c="w-[69px]" /><Caret c="mr-[6px]" /><Sep c="mr-[5px]" />
              <T i="check" t="查改标注" c="w-[73px]" /><Caret />
            </Seg>
            <Seg c="h-[26px] w-[30px] ml-[52px] pl-[3px]"><Grip /></Seg>
          </div>
          {/* canvas */}
          <div className="relative h-[509px] shrink-0 overflow-hidden">
            <Drawing />
            <div className="absolute left-[10px] top-[4px] w-[166px] h-[178px] bg-white border border-[#bdbdbd] border-b-[#777] border-r-[#777] shadow-[2px_2px_4px_rgba(0,0,0,0.4)] flex flex-col">
              <div className="h-[30px] shrink-0 flex items-center pl-[7px] text-[#a8a8a8]">钢筋显示控制面板</div>
              <div className="flex-1 border-2 border-[#8f8f8f] bg-white pl-[3px] pt-[2px] flex flex-col">
                <Check t="X向纵筋" /><Check t="Y向纵筋" /><Check t="显示其它图元" /><Check t="显示详细公式" />
              </div>
            </div>
          </div>
          {/* bottom toolbar */}
          <div className="h-[28px] flex items-center shrink-0 ml-[2px]">
            <Seg c="h-[28px] w-[208px] pl-[3px]">
              <Grip c="mr-[3px]" />
              <T i="ortho" t="正交" c="w-[48px]" />
              <On c="w-[76px]"><Ic n="snap" /><span>对象捕捉</span></On>
              <On c="w-[75px] -ml-px"><Ic n="dyn" /><span>动态输入</span></On>
            </Seg>
            <Seg c="h-[28px] w-[262px] ml-[2px] pl-[3px]">
              <Grip c="mr-[5px]" />
              <T i="cross" t="交点" c="w-[47px]" />
              <On c="w-[50px]"><Ic n="perp" /><span>垂点</span></On>
              <On c="w-[51px]"><Ic n="mid" /><span>中点</span></On>
              <div className="ml-[3px]"><T i="vert" t="顶点" c="w-[51px]" /></div>
              <T i="coord" t="坐标" gap="gap-[5px]" />
            </Seg>
            <Seg c="h-[28px] w-[367px] ml-[3px] pl-[3px] text-[#555]">
              <Grip c="mr-[1px]" />
              <Sel t="不偏移" c="w-[60px] text-black" />
              <Sep c="ml-[4px] mr-[2px]" />
              <span className="w-[18px] shrink-0">X=</span>
              <Spin t="0" c="w-[58px]" />
              <span className="ml-[2px] w-[25px] shrink-0">mm</span>
              <span className="w-[19px] shrink-0">Y=</span>
              <Spin t="0" c="w-[57px]" />
              <span className="ml-[2px] w-[24px] shrink-0">mm</span>
              <Sep c="mr-[4px]" />
              <div className="w-[11px] h-[11px] border border-[#8a8a8a] bg-white shrink-0" />
              <span className="ml-[7px] w-[30px] shrink-0 whitespace-nowrap text-black">旋转</span>
              <Spin t="0.000" c="w-[66px]" />
              <span className="ml-[3px] shrink-0">°</span>
            </Seg>
          </div>
        </div>
      </div>
      <div className="h-[3px] shrink-0" />
      {/* status */}
      <div className="h-[20px] shrink-0 flex items-stretch">
        <Cell c="w-[147px] ml-px"><Mono t="X=232949 Y=15332" /></Cell>
        <Cell c="w-[79px] ml-[2px]"><Mono t="层高:3.47m" /></Cell>
        <Cell c="w-[98px] ml-[2px]"><Mono t="底标高:-3.5m" /></Cell>
        <Cell c="w-[48px] ml-[2px]"><Mono t="1(1)" /></Cell>
        <Cell c="flex-1 ml-[2px]"><span /></Cell>
      </div>
      {/* taskbar */}
      <div className="h-[40px] shrink-0 bg-[#030b10] flex items-center text-white">
        <div className="w-[48px] h-full bg-black flex items-center justify-center">
          <svg width="17" height="17" viewBox="0 0 17 17"><path d="M0 2.500l7-1v6.500H0zM8 1.300L17 0v8H8zM0 9h7v6.500l-7-1zM8 9h9v8l-9-1.300z" fill="#fff" /></svg>
        </div>
        <div className="w-[343px] h-full bg-[#333] flex items-center pl-[10px] text-[13px] text-[#9c9c9c]">
          <div className="w-[20px] h-[20px] rounded-full border-[3px] border-[#e8e8e8] shrink-0" />
          <span className="ml-[6px] flex-1 whitespace-nowrap">在这里输入你要搜索的内容</span>
          <svg width="12" height="18" viewBox="0 0 12 18" fill="none" className="mr-[13px]"><rect x="3.500" y="1" width="5" height="10" rx="2.500" stroke="#aaa" /><path d="M1 8c0 6 10 6 10 0M6 13v4M3 17h6" stroke="#aaa" /></svg>
        </div>
        <div className="w-[3px]" />
        <TB><svg width="22" height="22" viewBox="0 0 22 22"><g fill="#e4e4e4"><path d="M10 10C3 10 1 6 2 3s6-3 8 0 1 5 0 7z" /><path d="M12 10c0-7 4-9 7-8s3 6 0 8-5 1-7 0z" /><path d="M12 12c7 0 9 4 8 7s-6 3-8 0-1-5 0-7z" /><path d="M10 12c0 7-4 9-7 8s-3-6 0-8 5-1 7 0z" /></g></svg></TB>
        <TB><svg width="20" height="22" viewBox="0 0 20 22" fill="none"><path d="M14 3C7 1 2 6 3 12c1 6 8 8 12 4 3-3 1-8-3-7-3 1-3 4-1 6" stroke="#d5d5d5" strokeWidth="1.600" /></svg></TB>
        <TB c="bg-[#1b272c]"><svg width="22" height="24" viewBox="0 0 22 24" fill="none"><path d="M4 11h15c0-10-14-11-16 0-1 8 8 13 15 8v-4c-5 3-10 2-11-4z" fill="#0a78d7" /></svg></TB>
        <TB><svg width="20" height="24" viewBox="0 0 20 24"><path d="M1 7h18v16H1z" fill="#fff" /><path d="M6 7c0-7 8-7 8 0" fill="none" stroke="#fff" strokeWidth="1.500" /><path d="M6 11h3.500v3.500H6zM10.500 11H14v3.500h-3.500zM6 15.500h3.500V19H6zM10.500 15.500H14V19h-3.500z" fill="#111" /></svg></TB>
        <TB><svg width="20" height="20" viewBox="0 0 20 20"><path d="M1 2h18v17H1z" fill="#f2d36c" /><path d="M1 2h18v4H1z" fill="#fbe9a6" /><path d="M6 11l4-4 4 4v6H6z" fill="#2f9ed6" /><path d="M9 13h2v4H9z" fill="#f2d36c" /></svg></TB>
        <TB under c="bg-[#2e3d46]"><div className="w-[24px] h-[24px] rounded-[4px] bg-[#0d8bf0] flex items-center justify-center"><svg width="18" height="18" viewBox="0 0 18 18" fill="none"><path d="M9 2v14M2 9h14M4 6L2 9l2 3M14 6l2 3-2 3" stroke="#fff" strokeWidth="2" /></svg></div></TB>
        <TB under><svg width="24" height="26" viewBox="0 0 24 26" fill="none"><path d="M20 4C10 1 3 7 4 14c1 8 12 10 15 4 2-4-1-8-6-7" stroke="#1d8ce8" strokeWidth="4" /></svg></TB>
        <TB under><svg width="24" height="24" viewBox="0 0 24 24"><rect x="1" y="2" width="22" height="21" rx="2" fill="#f0a830" /><rect x="4" y="5" width="16" height="15" fill="#fbeed0" /><path d="M6 10h9M6 13h9M6 16h7" stroke="#c89a50" /><path d="M12 14L20 3l2 2-8 10z" fill="#c84a1a" /></svg></TB>
        <TB under><svg width="22" height="24" viewBox="0 0 22 24" fill="none"><circle cx="11" cy="12" r="10" fill="#6cc438" /><path d="M5 11h12M6 15c3 3 8 3 10 0M6 8c3-3 7-3 10 0" stroke="#fff" strokeWidth="2" /></svg></TB>
        <div className="ml-[146px] w-[60px] shrink-0 flex flex-col items-center gap-[6px] text-[12.500px] text-[#eee]"><span>28%</span><span className="whitespace-nowrap">CPU使用</span></div>
        <svg width="12" height="7" viewBox="0 0 12 7" fill="none" className="ml-[14px] shrink-0"><path d="M0 6.500l6-6 6 6" stroke="#eee" /></svg>
        <svg width="16" height="12" viewBox="0 0 16 12" fill="none" className="ml-[10px] shrink-0"><path d="M3 0v4M7 0v4M1 4h9v7H1z" stroke="#eee" /><path d="M4 5h9v6H4z" fill="#eee" /><path d="M14 6h2v4h-2z" fill="#eee" /></svg>
        <svg width="16" height="14" viewBox="0 0 16 14" fill="none" className="ml-[9px] shrink-0"><path d="M3 13c0-6 4-10 11-11M6 13c0-4 3-7 8-7M9 13c0-2 2-4 5-4" stroke="#bbb" strokeDasharray="2 1" /><circle cx="13" cy="12" r="1.500" fill="#eee" /></svg>
        <svg width="16" height="14" viewBox="0 0 16 14" fill="none" className="ml-[6px] shrink-0"><path d="M1 5h3l4-4v12L4 9H1zM10 4c2 2 2 4 0 6M12 2c3 3 3 7 0 10" stroke="#eee" /></svg>
        <svg width="24" height="14" viewBox="0 0 24 14" fill="none" className="ml-[8px] shrink-0"><rect x=".5" y=".5" width="23" height="13" stroke="#eee" /><path d="M3 4h18M3 7h18M3 10h18" stroke="#eee" strokeDasharray="2 1" /></svg>
        <span className="ml-[9px] w-[14px] text-[13px] font-bold shrink-0">英</span>
        <svg width="14" height="14" viewBox="0 0 14 14" fill="none" className="ml-[14px] shrink-0"><rect width="14" height="14" rx="3" fill="#e8481a" transform="rotate(-8 7 7)" /><path d="M10 4c-3-1.500-6 0-5 2s5 1 5 3-3 3-6 1.500" stroke="#fff" strokeWidth="1.600" /></svg>
        <div className="ml-[16px] w-[60px] shrink-0 flex flex-col items-center gap-[6px] text-[12.500px]"><span>21:46</span><span className="whitespace-nowrap">2017/9/7</span></div>
        <div className="relative ml-[24px] w-[18px] h-[16px] shrink-0 bg-white -mt-[6px]">
          <div className="absolute left-[3px] top-[8px] w-[20px] h-[20px] rounded-full bg-[#333] border border-[#777] text-white text-[11px] font-bold flex items-center justify-center">20</div>
        </div>
      </div>
      {/* sogou */}
      <div className="absolute left-[1178px] top-[706px] w-[188px] h-[21px] bg-white flex items-center">
        <div className="absolute left-[3px] -top-[5px] w-[27px] h-[26px] rounded-[6px] bg-[#f0541e] rotate-[-8deg] flex items-center justify-center">
          <svg width="20" height="20" viewBox="0 0 20 20" fill="none"><path d="M16 5C10 2 4 4 5 8s11 2 11 6-8 5-12 2" stroke="#fff" strokeWidth="3" /></svg>
        </div>
        <span className="ml-[37px] w-[26px] text-[14px] font-bold text-[#1b6fc2]">英</span>
        <span className="w-[20px] text-[13px] font-bold text-[#1b6fc2]">•,</span>
        <svg width="12" height="17" viewBox="0 0 12 17" fill="none" className="ml-[2px]"><rect x="3" y="0" width="6" height="11" rx="3" fill="#1b6fc2" /><path d="M1 7c0 6 10 6 10 0M6 12v4" stroke="#1b6fc2" strokeWidth="1.500" /></svg>
        <svg width="16" height="12" viewBox="0 0 16 12" fill="none" className="ml-[8px]"><rect x=".8" y=".8" width="14.400" height="10.400" rx="1" stroke="#1b6fc2" strokeWidth="1.600" /><path d="M3 4h10M3 6.500h10M4 9h8" stroke="#1b6fc2" strokeDasharray="1.500 1" /></svg>
        <svg width="16" height="16" viewBox="0 0 16 16" className="ml-[6px]"><circle cx="7" cy="3.500" r="3" fill="#a8bfd8" /><path d="M1 12c0-6 11-6 12 0v3H1z" fill="#a8bfd8" /><rect x="8" y="9" width="8" height="7" fill="#a8bfd8" /></svg>
        <svg width="16" height="14" viewBox="0 0 16 14" className="ml-[6px]"><path d="M5 0L0 3l2 3 2-1v9h8V5l2 1 2-3-5-3c-1 2-5 2-6 0z" fill="#1b6fc2" /></svg>
        <svg width="16" height="16" viewBox="0 0 16 16" fill="none" className="ml-[7px]"><path d="M2 14l7-7" stroke="#1b6fc2" strokeWidth="3" /><path d="M14 2a4 4 0 0 0-5 5l3 1a4 4 0 0 0 3-5l-2 1-1-1z" fill="#1b6fc2" /></svg>
      </div>
      {/* badge */}
      <div className="absolute left-[944px] -top-[24px] w-[48px] h-[48px] rounded-full bg-[#2cb45c] border-2 border-[#e2e2e2] shadow-[0_1px_3px_rgba(0,0,0,0.5)] flex items-end justify-center pb-[9px] text-white text-[11px] font-bold">74</div>
    </div>
  );
}
